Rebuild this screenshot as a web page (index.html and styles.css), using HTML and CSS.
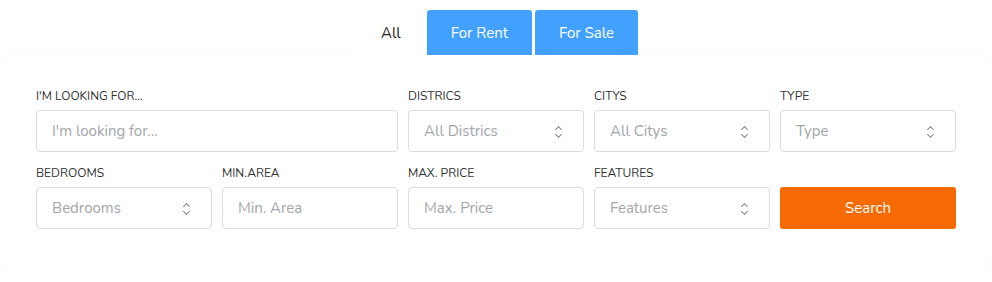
FILE: index.html
```html
<!DOCTYPE html>
<html>
<head>
    <title>Search</title>
    <link rel="stylesheet" href="styles.css">
</head>
<body>
    <div class="search-box">
        <div class="tabs">
            <button class="tab active">All</button>
            <button class="tab">For Rent</button>
            <button class="tab">For Sale</button>
        </div>
        <div class="card">
            <div class="form-grid">
                <div class="field wide">
                    <label>I'm looking for...</label>
                    <input type="text" placeholder="I'm looking for...">
                </div>
                <div class="field">
                    <label>Districs</label>
                    <div class="select">All Districs</div>
                </div>
                <div class="field">
                    <label>Citys</label>
                    <div class="select">All Citys</div>
                </div>
                <div class="field">
                    <label>Type</label>
                    <div class="select">Type</div>
                </div>
                <div class="field">
                    <label>Bedrooms</label>
                    <div class="select">Bedrooms</div>
                </div>
                <div class="field">
                    <label>Min.Area</label>
                    <input type="text" placeholder="Min. Area">
                </div>
                <div class="field">
                    <label>Max. Price</label>
                    <input type="text" placeholder="Max. Price">
                </div>
                <div class="field">
                    <label>Features</label>
                    <div class="select">Features</div>
                </div>
                <div class="field">
                    <label>&nbsp;</label>
                    <button class="search-button">Search</button>
                </div>
            </div>
        </div>
    </div>
</body>
</html>
```

FILE: styles.css
```css
body {
    margin: 0;
    font-family: "Nunito", "Open Sans", sans-serif;
    background: #fff;
}
.search-box {
    padding-top: 10px;
}
.tabs {
    display: flex;
    justify-content: center;
    gap: 3px;
}
.tab {
    height: 45px;
    padding: 0 24px;
    border: none;
    border-radius: 3px 3px 0 0;
    background: #42a0ff;
    color: #fff;
    font-family: inherit;
    font-size: 15px;
}
.tab.active {
    padding: 0 23px 0 27px;
    background: #fff;
    color: #222;
}
.card {
    margin: 0 2px 0 0;
    padding: 33px 35px 39px 36px;
    border-radius: 8px;
    box-shadow: 0 0 2px rgba(0, 0, 0, 0.06);
    background: #fff;
}
.form-grid {
    display: grid;
    grid-template-columns: repeat(5, 176px);
    column-gap: 10px;
    row-gap: 13px;
}
.field.wide {
    grid-column: span 2;
}
label {
    display: block;
    margin-bottom: 6px;
    font-size: 12px;
    line-height: 16px;
    color: #333;
    text-transform: uppercase;
}
input,
.select {
    display: flex;
    align-items: center;
    width: 100%;
    height: 42px;
    box-sizing: border-box;
    padding: 0 15px;
    border: 1px solid #dcdcdc;
    border-radius: 4px;
    background: #fff;
    font-family: inherit;
    font-size: 15px;
    color: #a2a6ab;
}
input::placeholder {
    color: #a2a6ab;
}
.select {
    position: relative;
}
.select::before,
.select::after {
    content: '';
    position: absolute;
    right: 22px;
    width: 4px;
    height: 4px;
    border-left: 1.5px solid #888;
    border-top: 1.5px solid #888;
}
.select::before {
    top: 16px;
    transform: rotate(45deg);
}
.select::after {
    top: 21px;
    transform: rotate(-135deg);
}
.search-button {
    width: 100%;
    height: 42px;
    border: none;
    border-radius: 3px;
    background: #f66a04;
    color: #fff;
    font-family: inherit;
    font-size: 15px;
}
```
